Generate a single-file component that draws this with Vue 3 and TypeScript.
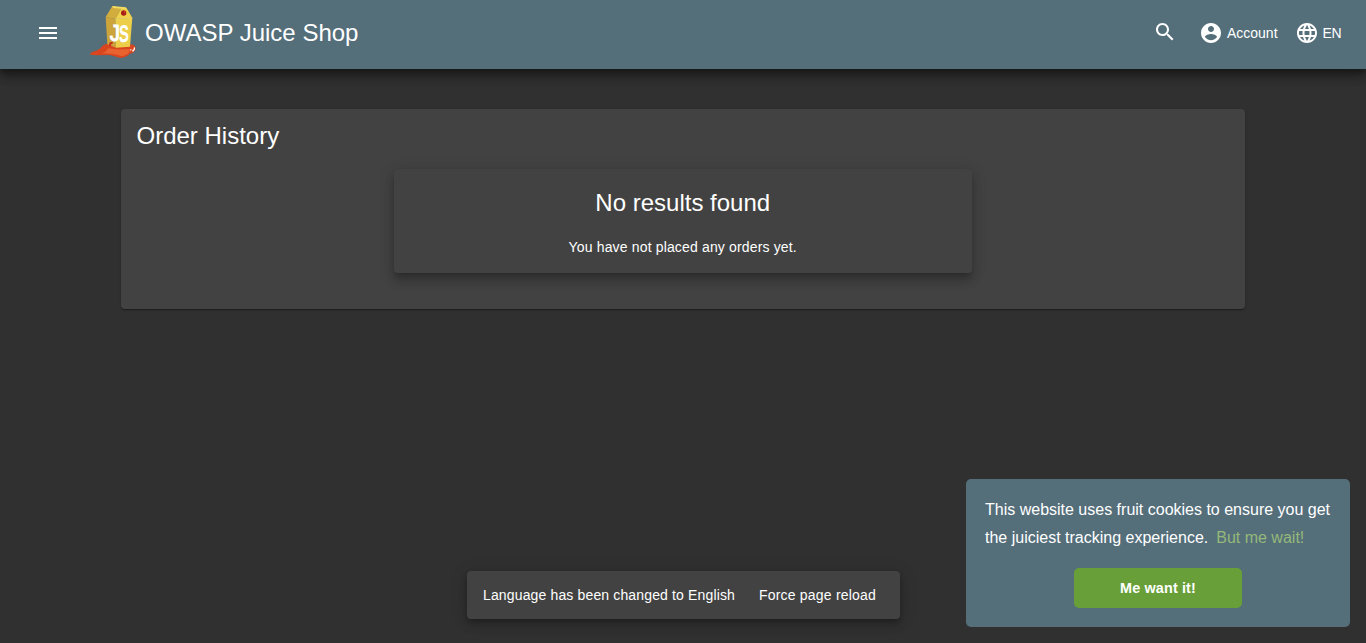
<script setup lang="ts">
import { ref } from 'vue'

const title = ref<string>('OWASP Juice Shop')
const language = ref<string>('EN')
</script>

<template>
  <div class="page">
    <header class="toolbar">
      <button class="menu" aria-label="Open menu">
        <svg viewBox="0 0 24 24" width="24" height="24"><path d="M3 18h18v-2H3v2zm0-5h18v-2H3v2zm0-7v2h18V6H3z" /></svg>
      </button>
      <svg class="logo" viewBox="30 18 138 156" width="46" height="52">
        <path fill="#d9451f" d="M78 132 Q92 128 106 138 L148 133 Q167 133 167 146 Q165 158 148 162 Q140 173 121 174 Q102 168 88 165 L50 166 L30 164 Q32 157 44 154 Q61 148 67 137 Z" />
        <path fill="#e8632f" d="M84 145 Q105 150 148 147 Q155 160 126 169 Q102 160 65 160 Q80 157 84 145Z" />
        <path fill="#cba43b" d="M77 51 L106 57 L108 143 L82 133 Z" />
        <path fill="#d2ad3e" d="M77 51 L97 18 L125 23 L106 57 Z" />
        <path fill="#f0d14b" d="M125 23 L140 25 L157 53 L106 57 Z" />
        <path fill="#ecce4a" d="M106 57 L157 53 L150 140 L108 143 Z" />
        <path fill="#f2dc62" d="M97 18 L138 22 L140 28 L99 24 Z" />
        <path fill="none" stroke="#f4de72" stroke-width="1.5" d="M106 57 L157 53" />
        <circle cx="131" cy="39" r="8" fill="#a51f16" />
        <circle cx="134" cy="36" r="2.5" fill="#e5492b" />
        <path fill="none" stroke="#c92f1b" stroke-width="6" d="M98 128 L91 130 L90 138" />
        <g fill="#fff" stroke="#fff" stroke-width="4" class="mark">
          <text transform="translate(90 121) skewY(5) scale(.86 1)" font-size="68">J</text>
          <text transform="translate(118 125) skewY(-4) scale(.61 1)" font-size="68">S</text>
        </g>
        <path fill="none" stroke="#fff" stroke-width="3.5" d="M163 142 Q165 149 157 154 M151 151 l3 -3" />
      </svg>
      <span class="title">{{ title }}</span>
      <span class="spacer" />
      <button class="search" aria-label="Search">
        <svg viewBox="0 0 24 24" width="24" height="24"><path d="M15.5 14h-.79l-.28-.27C15.41 12.59 16 11.11 16 9.5 16 5.91 13.09 3 9.5 3S3 5.91 3 9.5 5.91 16 9.5 16c1.61 0 3.09-.59 4.23-1.57l.27.28v.79l5 4.99L20.49 19l-4.99-5zm-6 0C7.01 14 5 11.99 5 9.5S7.01 5 9.5 5 14 7.01 14 9.5 11.99 14 9.5 14z" /></svg>
      </button>
      <button class="nav account">
        <svg viewBox="0 0 24 24" width="24" height="24"><path d="M12 2C6.48 2 2 6.48 2 12s4.48 10 10 10 10-4.48 10-10S17.52 2 12 2zm0 3c1.66 0 3 1.34 3 3s-1.34 3-3 3-3-1.34-3-3 1.34-3 3-3zm0 14.2c-2.5 0-4.71-1.28-6-3.22.03-1.99 4-3.08 6-3.08 1.99 0 5.97 1.09 6 3.08-1.29 1.94-3.5 3.22-6 3.22z" /></svg>
        <span>Account</span>
      </button>
      <button class="nav">
        <svg viewBox="0 0 24 24" width="24" height="24"><path d="M11.99 2C6.47 2 2 6.48 2 12s4.47 10 9.99 10C17.52 22 22 17.52 22 12S17.52 2 11.99 2zm6.93 6h-2.95c-.32-1.25-.78-2.45-1.38-3.56 1.84.63 3.37 1.91 4.33 3.56zM12 4.04c.83 1.2 1.48 2.53 1.91 3.96h-3.82c.43-1.43 1.08-2.76 1.91-3.96zM4.26 14C4.1 13.36 4 12.69 4 12s.1-1.36.26-2h3.38c-.08.66-.14 1.32-.14 2s.06 1.34.14 2H4.26zm.82 2h2.95c.32 1.25.78 2.45 1.38 3.56-1.84-.63-3.37-1.9-4.33-3.56zm2.95-8H5.08c.96-1.66 2.49-2.93 4.33-3.56C8.81 5.55 8.35 6.75 8.03 8zM12 19.96c-.83-1.2-1.48-2.53-1.91-3.96h3.82c-.43 1.43-1.08 2.76-1.91 3.96zM14.34 14H9.66c-.09-.66-.16-1.32-.16-2s.07-1.35.16-2h4.68c.09.65.16 1.32.16 2s-.07 1.34-.16 2zm.25 5.56c.6-1.11 1.06-2.31 1.38-3.56h2.95c-.96 1.65-2.49 2.93-4.33 3.56zM16.36 14c.08-.66.14-1.32.14-2s-.06-1.34-.14-2h3.38c.16.64.26 1.31.26 2s-.1 1.36-.26 2h-3.38z" /></svg>
        <span class="lang">{{ language }}</span>
      </button>
    </header>

    <main class="card">
      <h1>Order History</h1>
      <section class="empty">
        <h2>No results found</h2>
        <p>You have not placed any orders yet.</p>
      </section>
    </main>

    <div class="snackbar">
      <span>Language has been changed to English</span>
      <button>Force page reload</button>
    </div>

    <aside class="cookies">
      <div class="message">
        <div>This website uses fruit cookies to ensure you get</div>
        <div class="line">
          <span>the juiciest tracking experience.</span>
          <a>But me wait!</a>
        </div>
      </div>
      <button>Me want it!</button>
    </aside>
  </div>
</template>

<style>
body {
  background: #303030;
  overflow: hidden;
}
</style>

<style scoped>
.page {
  height: 643px;
  position: relative;
  overflow: hidden;
  background: #303030;
  color: #fff;
  font: 14px/20px "Liberation Sans", Arial, sans-serif;
}
button {
  border: 0;
  padding: 0;
  background: none;
  color: inherit;
  font: inherit;
}
svg {
  display: block;
  fill: currentColor;
  flex: none;
}
.toolbar {
  position: relative;
  box-sizing: border-box;
  height: 69px;
  padding: 0 25px 4px 36px;
  display: flex;
  align-items: center;
  background: #546e7a;
  box-shadow: 0 3px 5px -1px rgba(0, 0, 0, .2), 0 6px 10px rgba(0, 0, 0, .14), 0 1px 18px rgba(0, 0, 0, .12), 0 6px 10px rgba(0, 0, 0, .3);
}
.logo {
  margin: -2px 9px 0 30px;
}
.mark {
  font-family: "Liberation Sans", Arial, sans-serif;
}
.title {
  font-size: 24px;
  line-height: 32px;
}
.spacer {
  flex: 1;
}
.search {
  margin: 0 22px 2px 0;
}
.nav {
  display: flex;
  align-items: center;
  gap: 4px;
}
.account {
  margin-right: 17px;
}
.lang {
  letter-spacing: -.5px;
}
.card {
  box-sizing: border-box;
  width: 1124px;
  height: 200px;
  margin: 40px auto 0;
  padding: 11px 16px 0 15.5px;
  border-radius: 4px;
  background: #424242;
  box-shadow: 0 2px 1px -1px rgba(0, 0, 0, .2), 0 1px 1px rgba(0, 0, 0, .14), 0 1px 3px rgba(0, 0, 0, .12);
}
h1,
h2 {
  margin: 0;
  font-size: 24px;
  line-height: 32px;
  font-weight: 400;
}
.empty {
  box-sizing: border-box;
  width: 578px;
  height: 104px;
  margin: 17px auto 0;
  padding-top: 18px;
  text-align: center;
  border-radius: 4px;
  background: #424242;
  box-shadow: 0 5px 5px -3px rgba(0, 0, 0, .2), 0 8px 10px 1px rgba(0, 0, 0, .14), 0 3px 14px 2px rgba(0, 0, 0, .12);
}
.empty p {
  margin: 18px 0 0;
  letter-spacing: .155px;
}
.snackbar {
  position: absolute;
  left: 467px;
  bottom: 24px;
  box-sizing: border-box;
  width: 433px;
  height: 48px;
  padding: 0 16px;
  display: flex;
  align-items: center;
  gap: 24px;
  border-radius: 4px;
  background: #424242;
  letter-spacing: .145px;
  box-shadow: 0 3px 5px -1px rgba(0, 0, 0, .2), 0 6px 10px rgba(0, 0, 0, .14), 0 1px 18px rgba(0, 0, 0, .12);
}
.snackbar button {
  letter-spacing: .2px;
}
.cookies {
  position: absolute;
  right: 16px;
  bottom: 16px;
  box-sizing: border-box;
  width: 384px;
  height: 148px;
  padding: 17px 19px 19px;
  display: flex;
  flex-direction: column;
  align-items: center;
  justify-content: space-between;
  border-radius: 5px;
  background: #546e7a;
  font-size: 16px;
  line-height: 28px;
}
.message {
  width: 100%;
  white-space: nowrap;
}
.line {
  display: flex;
  gap: 8px;
}
.cookies a {
  color: #94b97b;
}
.cookies button {
  width: 168px;
  height: 40px;
  border-radius: 5px;
  background: #689f38;
  font-size: 14.4px;
  font-weight: 700;
  letter-spacing: .15px;
}
</style>
